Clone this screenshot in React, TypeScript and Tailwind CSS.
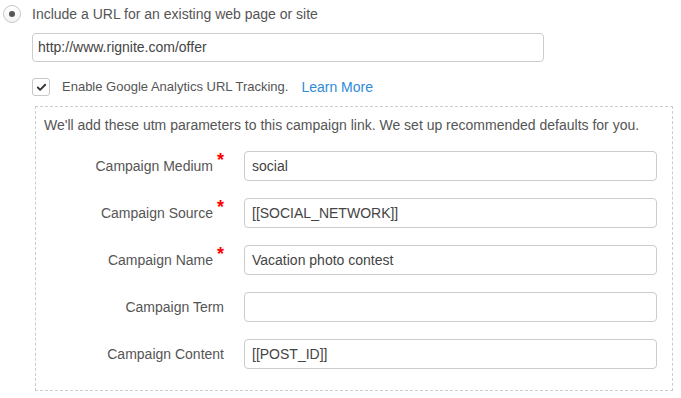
import { Check } from 'lucide-react'

const fields = [
  { label: 'Campaign Medium', value: 'social', required: true },
  { label: 'Campaign Source', value: '[[SOCIAL_NETWORK]]', required: true },
  { label: 'Campaign Name', value: 'Vacation photo contest', required: true },
  { label: 'Campaign Term', value: '', required: false },
  { label: 'Campaign Content', value: '[[POST_ID]]', required: false },
]

export default function App() {
  return (
    <div className="w-[681px] h-[398px] overflow-hidden bg-white pt-[5px] font-['Liberation_Sans',Arial,sans-serif] text-[14px] text-[#555]">
      {/* url option */}
      <div className="flex h-[18px] items-center pl-[3px]">
        <span className="flex h-[18px] w-[18px] items-center justify-center rounded-full border border-[#c8c8c8] bg-gradient-to-b from-white to-[#f2f2f2]">
          <span className="h-[6px] w-[6px] rounded-full bg-[#555]" />
        </span>
        <span className="ml-[11px] leading-none">Include a URL for an existing web page or site</span>
      </div>

      <div className="ml-[32px] mt-[10px] flex h-[29px] w-[512px] items-center rounded-[4px] border border-[#ccc] pl-[5px] text-[#444]">
        http://www.rignite.com/offer
      </div>

      <div className="ml-[32px] mt-[16px] flex h-[18px] items-center">
        <span className="flex h-[18px] w-[18px] items-center justify-center rounded-[3px] border border-[#c8c8c8] bg-white">
          <Check size={11} strokeWidth={4} className="text-[#333]" />
        </span>
        <span className="ml-[12px] text-[13px]">Enable Google Analytics URL Tracking.</span>
        <a className="ml-[13px] text-[#2e8bd8]">Learn More</a>
      </div>

      {/* utm params */}
      <div className="ml-[35px] mt-[10px] h-[285px] w-[638px] border border-dashed border-[#ccc] pl-[8px] pr-[15px] pt-[10px]">
        <p className="leading-[16px]">
          We'll add these utm parameters to this campaign link. We set up recommended defaults for you.
        </p>
        <div className="mt-[18px] -ml-[8px] flex flex-col gap-[17px]">
          {fields.map((f) => (
            <div key={f.label} className="flex items-center">
              <div className="flex w-[188px] justify-end">
                <span>{f.label}</span>
                {f.required && (
                  <span className="relative -top-[5px] ml-[4px] text-[18px] font-bold leading-none text-[#f00]">*</span>
                )}
              </div>
              <div className="ml-[20px] flex h-[30px] w-[413px] items-center rounded-[4px] border border-[#ccc] pl-[7px] text-[#444]">
                {f.value}
              </div>
            </div>
          ))}
        </div>
      </div>
    </div>
  )
}
